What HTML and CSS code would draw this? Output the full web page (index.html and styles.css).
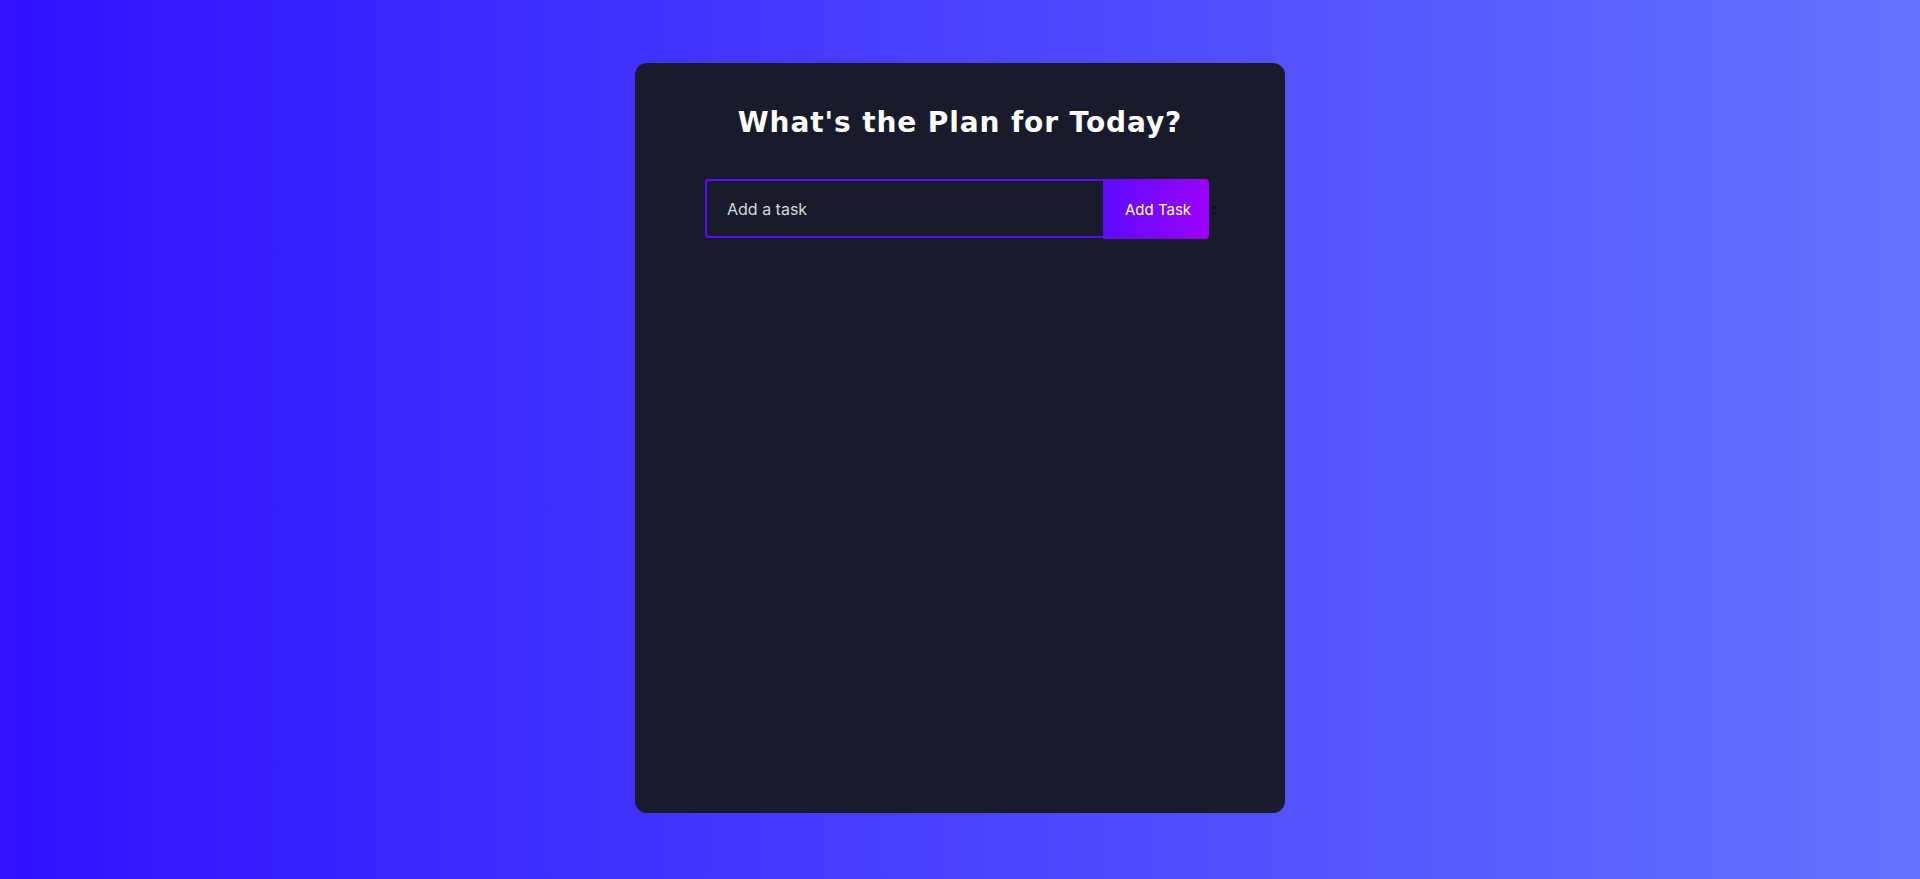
FILE: index.html
```html
<!DOCTYPE html>
<html lang="en">
<head>
<meta charset="utf-8">
<title>Todo App</title>
<link rel="stylesheet" href="styles.css">
</head>
<body>
  <div class="todo-app">
    <h1 class="title">What's the Plan for Today?</h1>
    <form class="todo-form">
      <input class="todo-input" type="text" placeholder="Add a task" name="text">
      <button class="todo-button" type="button">Add Task</button>
      <span class="stray">:</span>
    </form>
  </div>
</body>
</html>
```

FILE: styles.css
```css
* {
  box-sizing: border-box;
  margin: 0;
  padding: 0;
}

html, body {
  height: 100%;
}

body {
  background: linear-gradient(90deg, #3010ff 0%, #6473ff 100%);
  font-family: Inter, "Open Sans", sans-serif;
  overflow: hidden;
}

.todo-app {
  width: 650px;
  height: 750px;
  margin: 63px auto 0;
  background: #181b2b;
  border-radius: 12px;
  display: flex;
  flex-direction: column;
  align-items: center;
}

.title {
  margin-top: 44px;
  font-family: "DejaVu Sans", sans-serif;
  font-size: 28px;
  line-height: 32px;
  font-weight: 700;
  color: #ffffff;
  letter-spacing: 0.9px;
}

.todo-form {
  margin-top: 40px;
  display: flex;
  align-items: flex-start;
}

.todo-input {
  width: 398px;
  height: 59px;
  padding: 0 20px;
  border: 2px solid #5d0cff;
  border-right: none;
  border-radius: 4px 0 0 4px;
  background: transparent;
  color: #fff;
  font-family: Inter, sans-serif;
  font-size: 16px;
  outline: none;
}

.todo-input::placeholder {
  color: #d8d8dc;
}

.todo-button {
  width: 106px;
  height: 60px;
  padding-left: 4px;
  border: none;
  border-radius: 0 4px 4px 0;
  background: linear-gradient(90deg, #5d0cff 0%, #9b00fa 100%);
  color: #fff;
  font-family: Inter, sans-serif;
  font-size: 15px;
  cursor: pointer;
}

.stray {
  align-self: center;
  margin-left: 3px;
  width: 3px;
  font-size: 14px;
  line-height: 14px;
  color: #000;
}
```
